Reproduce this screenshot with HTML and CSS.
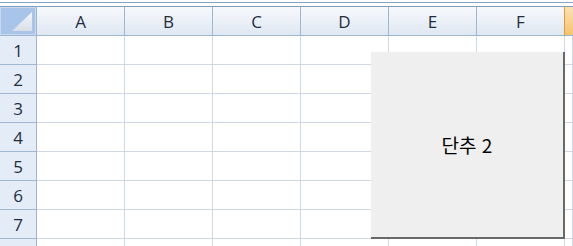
FILE: index.html
```html
<!DOCTYPE html>
<html lang="ko">
<head>
    <meta charset="UTF-8">
    <title>Sheet1</title>
    <link rel="stylesheet" href="styles.css">
</head>
<body>
    <div class="topbar"></div>
    <div class="sheet">
        <div class="grid">
            <div class="corner">
                <svg width="36" height="28" viewBox="0 0 36 28">
                    <defs>
                        <linearGradient id="tri" x1="0" y1="0" x2="0" y2="1">
                            <stop offset="0" stop-color="#f4f6fa"/>
                            <stop offset="1" stop-color="#d9dfe8"/>
                        </linearGradient>
                    </defs>
                    <polygon points="12,24 32,5 32,24" fill="url(#tri)"/>
                </svg>
            </div>
            <div class="colhead">A</div>
            <div class="colhead">B</div>
            <div class="colhead">C</div>
            <div class="colhead">D</div>
            <div class="colhead">E</div>
            <div class="colhead">F</div>
            <div class="colhead active"></div>
        </div>
        <div id="rows"></div>
        <div class="button">단추 2</div>
    </div>

    <script>
        // 행 번호와 셀 만들기
        const rows = document.getElementById('rows');
        for (let r = 1; r <= 8; r++) {
            const row = document.createElement('div');
            row.className = 'grid';
            const head = document.createElement('div');
            head.className = 'rowhead';
            head.innerText = r <= 7 ? r : '';
            row.appendChild(head);
            for (let c = 0; c < 7; c++) {
                const cell = document.createElement('div');
                cell.className = 'cell';
                row.appendChild(cell);
            }
            rows.appendChild(row);
        }
    </script>
</body>
</html>
```

FILE: styles.css
```css
html, body {
    width: 573px;
    height: 246px;
    overflow: hidden;
}
body {
    margin: 0;
    background: #fff;
    font-family: "Open Sans", "Liberation Sans", sans-serif;
}
.topbar {
    height: 6px;
    box-sizing: border-box;
    border-top: 2px solid #fff;
}
.topbar::before {
    content: "";
    display: block;
    height: 1px;
    background: #86a3c6;
}
.sheet {
    position: relative;
    height: 240px;
    overflow: hidden;
}
.grid {
    display: grid;
    grid-template-columns: 37px repeat(6, 88px) 1fr;
}
.corner {
    height: 30px;
    box-sizing: border-box;
    border-top: 1px solid #7f9db9;
    border-bottom: 1px solid #9eb6ce;
    border-right: 1px solid #9eb6ce;
    background: #a9c4e9;
    box-shadow: inset 1px 1px 0 #c8d9f1, inset -1px -1px 0 #c8d9f1;
}
.corner svg {
    display: block;
}
.colhead {
    height: 30px;
    box-sizing: border-box;
    border-top: 1px solid #7f9db9;
    border-bottom: 1px solid #9eb6ce;
    border-right: 1px solid #9eb6ce;
    background: linear-gradient(#f7f9fc, #dfe7f2);
    color: #1f2d3f;
    font-size: 17px;
    display: flex;
    align-items: center;
    justify-content: center;
}
.colhead.active {
    border-right: none;
    border-left: 1px solid #f29436;
    margin-left: -1px;
    background: linear-gradient(#fae3b4, #f4c46b);
}
.rowhead {
    height: 29px;
    box-sizing: border-box;
    border-bottom: 1px solid #9eb6ce;
    border-right: 1px solid #9eb6ce;
    background: #e4ecf7;
    color: #1f2d3f;
    font-size: 17px;
    display: flex;
    align-items: center;
    justify-content: center;
}
.cell {
    height: 29px;
    box-sizing: border-box;
    border-bottom: 1px solid #d0d7e5;
    border-right: 1px solid #d0d7e5;
}
.button {
    position: absolute;
    left: 371px;
    top: 46px;
    width: 194px;
    height: 187px;
    box-sizing: border-box;
    background: #efefef;
    border-right: 2px solid #696969;
    border-bottom: 2px solid #696969;
    display: flex;
    align-items: center;
    justify-content: center;
    font-family: "Noto Sans CJK KR", sans-serif;
    font-size: 19px;
    color: #000;
}
```
